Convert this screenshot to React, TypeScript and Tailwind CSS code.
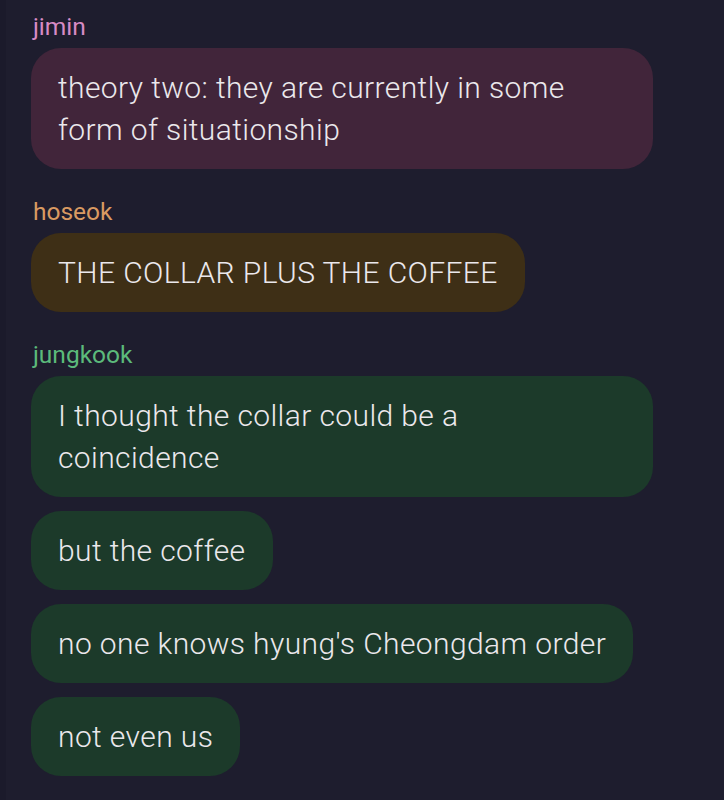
const messages = [
  {
    name: "jimin",
    nameColor: "text-[#d78bc5]",
    bubble: "bg-[#41253a]",
    lines: [{ text: "theory two: they are currently in some form of situationship", wide: true }],
  },
  {
    name: "hoseok",
    nameColor: "text-[#d99a62]",
    bubble: "bg-[#3e2f16]",
    lines: [{ text: "THE COLLAR PLUS THE COFFEE", wide: false }],
  },
  {
    name: "jungkook",
    nameColor: "text-[#5cba7b]",
    bubble: "bg-[#1c3a2a]",
    lines: [
      { text: "I thought the collar could be a coincidence", wide: true },
      { text: "but the coffee", wide: false },
      { text: "no one knows hyung's Cheongdam order", wide: false },
      { text: "not even us", wide: false },
    ],
  },
];

function App() {
  return (
    <div
      className="w-[724px] h-[800px] overflow-hidden bg-[#1e1d2e] border-l-[6px] border-[#1b1a2b] pl-[25px] pt-[13px] flex flex-col gap-[29px]"
      style={{ fontFamily: "Roboto, 'Liberation Sans', sans-serif" }}>
      {messages.map((m) => (
        <div key={m.name} className="flex flex-col items-start">
          {/* sender */}
          <span className={`text-[24.5px] leading-[28px] pl-[2px] mb-[7px] ${m.nameColor}`}>
            {m.name}
          </span>
          <div className="flex flex-col items-start gap-[14px]">
            {m.lines.map((line) => (
              <div
                key={line.text}
                className={`rounded-[30px] pl-[27px] py-[18.5px] text-[30px] leading-[42px] tracking-[0.4px] font-light text-[#ebe8ec] ${m.bubble} ${
                  line.wide ? "w-[622px] pr-[60px]" : "max-w-[622px] pr-[27px]"
                }`}>
                {line.text}
              </div>
            ))}
          </div>
        </div>
      ))}
    </div>
  );
}

export default App;
